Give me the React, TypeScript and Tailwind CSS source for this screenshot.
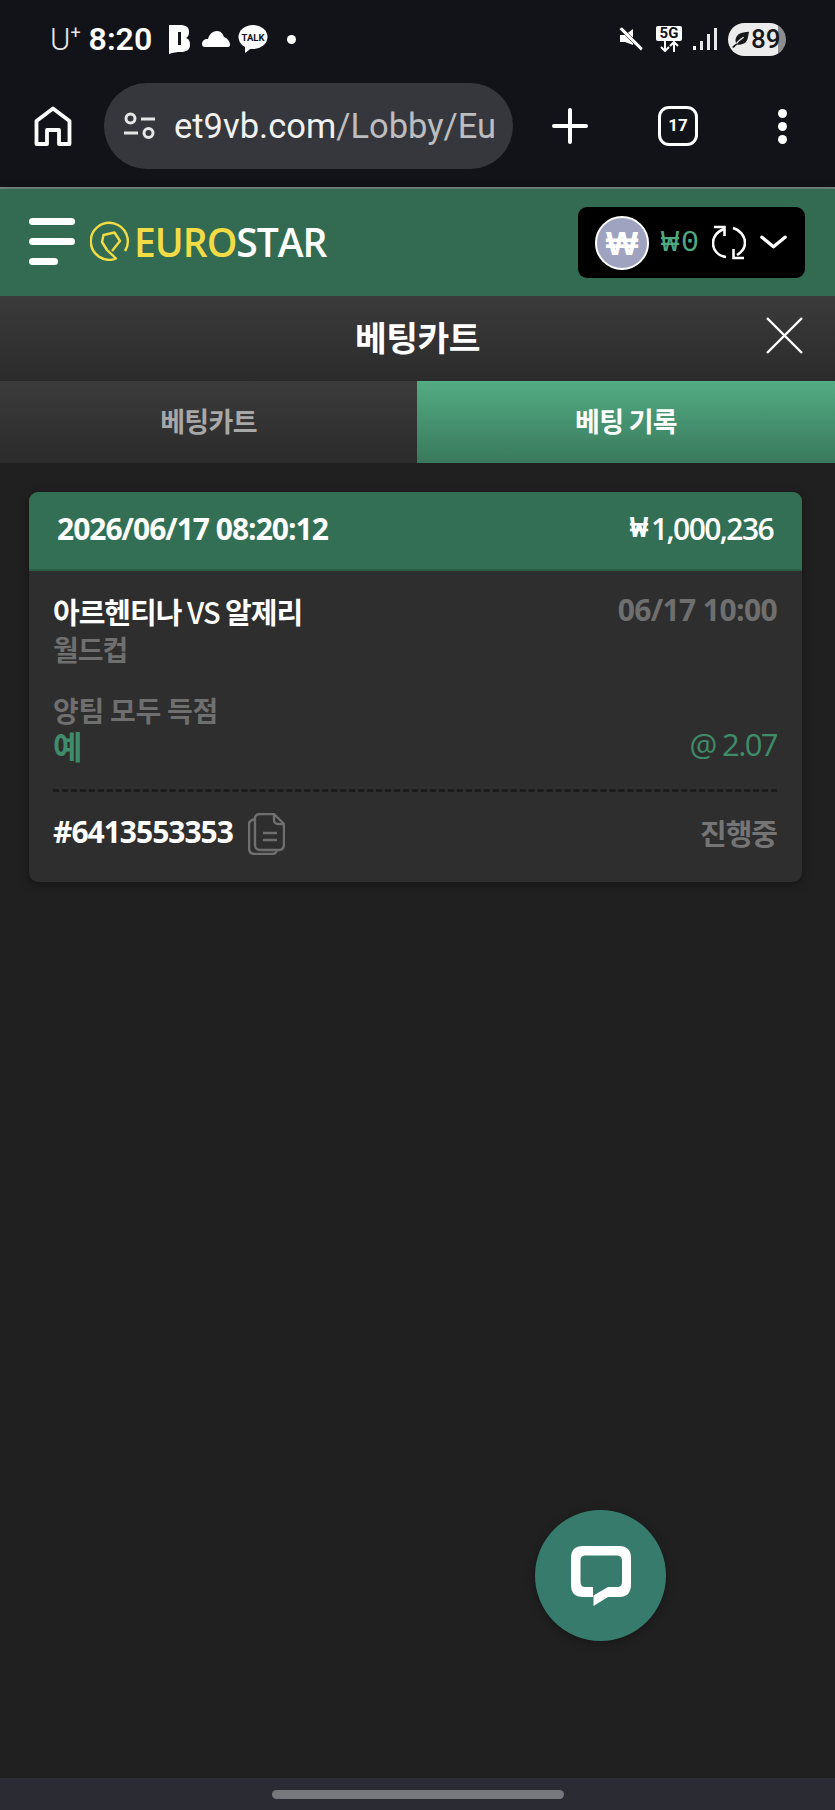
const ko = "font-['Noto_Sans_CJK_KR','Noto_Sans',sans-serif]"

function StatusBar() {
  return (
    <div className="flex h-[83px] items-start justify-between pt-[22px] pl-[50px] pr-[49px]">
      <div className="flex h-[34px] items-center">
        <span className="font-['Roboto',sans-serif] text-[31px] leading-none font-light text-[#e8e8e8]">U</span>
        <span className="mb-[13px] font-['Roboto',sans-serif] text-[18px] leading-none text-[#e8e8e8]">+</span>
        <span className="ml-[8px] font-['Roboto',sans-serif] text-[32px] leading-none font-semibold text-white">8:20</span>
        <svg className="ml-[17px]" width="21" height="30" viewBox="0 0 21 30" fill="#fff">
          <path d="M0 1h11c6 0 9 2 9 7 0 3-1 5-3 6 3 1 4 3 4 7 0 5-4 7-9 7-4 0-8 .6-12 2z" />
          <rect x="9" y="8" width="3" height="13" fill="#121318" />
        </svg>
        <svg className="ml-[12px]" width="28" height="16" viewBox="0 0 28 16" fill="#fff">
          <path d="M3 16C1 16 0 15 0 13c0-3 2-5 6-5 1-4 4-8 9-8 4 0 6 3 7 6 3 1 6 4 6 8 0 1-1 2-2 2z" />
        </svg>
        <svg className="ml-[8px]" width="30" height="28" viewBox="0 0 30 28">
          <ellipse cx="15" cy="12" rx="14.5" ry="12" fill="#fff" />
          <path d="M7 20l0 8 8-6z" fill="#fff" />
          <text x="15" y="15.5" textAnchor="middle" fontSize="9.5" fontWeight="700" fontFamily="Roboto, sans-serif" fill="#121318">TALK</text>
        </svg>
        <span className="ml-[19px] h-[9px] w-[9px] rounded-full bg-white" />
      </div>
      <div className="flex h-[34px] items-center">
        <svg width="24" height="24" viewBox="0 0 24 24" fill="#fff">
          <path d="M1 8h5l8-6v16L6 15H1z" />
          <path d="M0 2l3-2 21 21-2 3z" stroke="#121318" strokeWidth="0.6" />
        </svg>
        <div className="ml-[13px] flex w-[26px] flex-col items-center">
          <span className="flex h-[15px] w-[26px] items-center justify-center rounded-[2px] bg-white font-['Roboto',sans-serif] text-[15px] leading-none font-bold text-[#121318]">5G</span>
          <svg width="20" height="11" viewBox="0 0 20 11" fill="none" stroke="#fff" strokeWidth="2">
            <path d="M6 0v10M2 6l4 4 4-4M15 11V1M11 5l4-4 4 4" />
          </svg>
        </div>
        <div className="ml-[11px] flex h-[22px] items-end gap-[4px]">
          <span className="h-[4px] w-[3px] bg-white" />
          <span className="h-[9px] w-[3px] bg-[#e8e8e8]" />
          <span className="h-[16px] w-[3px] bg-[#e8e8e8]" />
          <span className="h-[22px] w-[3px] bg-[#e8e8e8]" />
        </div>
        <div className="ml-[11px] flex h-[33px] w-[58px] items-center overflow-hidden rounded-full bg-[linear-gradient(90deg,#ececec_86%,#8d8d8d_86%)] pl-[3px]">
          <svg width="19" height="18" viewBox="0 0 21 20" fill="#17181c">
            <path d="M1 19c2-2 3-3 5-4-2-3-1-7 2-10 3-2 8-3 12-3-1 4-1 9-4 12-3 2-6 3-9 2-1 1-3 2-4 4z" />
            <path d="M6 15c2-3 5-5 8-7" fill="none" stroke="#ececec" strokeWidth="1.5" />
          </svg>
          <span className="ml-[1px] font-['Roboto',sans-serif] text-[26px] leading-none font-medium text-[#17181c]">89</span>
        </div>
      </div>
    </div>
  )
}

function BrowserBar() {
  return (
    <div className="flex h-[86px] items-center pl-[34px]">
      <svg width="38" height="40" viewBox="0 0 38 40" fill="none" stroke="#fff" strokeWidth="3.8">
        <path d="M2.5 38V15L19 2.5 35.5 15v23H25V24H13v14z" strokeLinejoin="round" />
      </svg>
      <div className="ml-[32px] flex h-[86px] w-[409px] items-center rounded-full bg-[#36373c] pl-[19px]">
        <svg width="33" height="28" viewBox="0 0 33 28" fill="none" stroke="#e6e6e6" strokeWidth="3">
          <circle cx="7.5" cy="6.5" r="4.5" />
          <path d="M18 7h14M1 21h14" />
          <circle cx="25.5" cy="21" r="4.5" />
        </svg>
        <span className="ml-[18px] whitespace-nowrap font-['Roboto',sans-serif] text-[34.5px] leading-none text-[#bdbdc0]">
          <span className="text-[#f1f1f1]">et9vb.com</span>/Lobby/Eu
        </span>
      </div>
      <svg className="ml-[39px]" width="36" height="36" viewBox="0 0 36 36" stroke="#fff" strokeWidth="4" strokeLinecap="round">
        <path d="M18 2v32M2 18h32" />
      </svg>
      <div className="ml-[70px] flex h-[40px] w-[40px] items-center justify-center rounded-[11px] border-[3.5px] border-white font-['Roboto',sans-serif] text-[17px] font-bold text-white">
        17
      </div>
      <div className="ml-[80px] flex flex-col gap-[4px]">
        <span className="h-[9px] w-[9px] rounded-full bg-white" />
        <span className="h-[9px] w-[9px] rounded-full bg-white" />
        <span className="h-[9px] w-[9px] rounded-full bg-white" />
      </div>
    </div>
  )
}

function Logo() {
  return (
    <div className="ml-[15px] mb-[3px] flex items-center">
      <svg width="40" height="40" viewBox="0 0 40 40" fill="none" stroke="#f2dc45" strokeWidth="2.4" strokeLinejoin="round">
        <path d="M35 30A18.5 18.5 0 1 0 26 37.5L17 29 12 21 13.5 14 24.5 11.5 30 20 22 30" />
      </svg>
      <span className="ml-[4px] font-['Open_Sans',sans-serif] text-[39px] leading-none font-semibold tracking-[-1px] text-[#f2dc45]">
        EURO<span className="text-white">STAR</span>
      </span>
    </div>
  )
}

function Header() {
  return (
    <header className="flex h-[107px] items-center justify-between bg-[#336b52] pr-[30px] pl-[29px] shadow-[0_2px_6px_rgba(0,0,0,0.5)]">
      <div className="flex items-center">
        <div className="mb-[3px] flex w-[46px] flex-col gap-[13px]">
          <span className="h-[7px] w-[46px] rounded-full bg-white" />
          <span className="h-[7px] w-[46px] rounded-full bg-white" />
          <span className="h-[7px] w-[29px] rounded-full bg-white" />
        </div>
        <Logo />
      </div>
      <div className="flex h-[71px] w-[227px] items-center rounded-[9px] bg-black pl-[17px]">
        <div className="flex h-[54px] w-[54px] items-center justify-center rounded-full border-2 border-white bg-[#a0a3c0]">
          <span className="font-['Liberation_Sans',sans-serif] text-[34px] leading-none font-bold text-white">₩</span>
        </div>
        <span className="ml-[12px] font-['Liberation_Mono',monospace] text-[30px] leading-none tracking-[2px] text-[#4fa97f]">₩0</span>
        <svg className="ml-[11px]" width="34" height="36" viewBox="0 0 34 36" fill="none" stroke="#fff" strokeWidth="2.6">
          <path d="M12 4C4 7 1 13 1 18c0 7 5 13 13 14M21 3c7 2 12 8 12 15 0 5-3 9-8 12" />
          <path d="M2 2h10.5v9M32 33H21.500v-9" />
        </svg>
        <svg className="mb-[2px] ml-[14px]" width="27" height="16" viewBox="0 0 28 16" fill="none" stroke="#fff" strokeWidth="3.5" strokeLinecap="round" strokeLinejoin="round">
          <path d="M2 3l12 10L26 3" />
        </svg>
      </div>
    </header>
  )
}

function BetCard() {
  return (
    <div className={`ml-[29px] w-[773px] overflow-hidden rounded-[9px] bg-[#2e2e2e] shadow-[0_2px_8px_rgba(0,0,0,0.4)] ${ko}`}>
      <div className="flex h-[79px] items-center justify-between border-b-2 border-[#2c5f48] bg-[#336f55] pr-[29px] pb-[4px] pl-[28px] text-white">
        <span className="font-['Open_Sans',sans-serif] text-[30px] leading-none font-bold tracking-[-1px]">2026/06/17 08:20:12</span>
        <span className="flex items-center font-['Open_Sans',sans-serif] text-[30px] leading-none font-semibold tracking-[-1.6px]">
          <span className="mr-[3px] font-['Liberation_Mono',monospace] font-bold tracking-normal">₩</span>1,000,236
        </span>
      </div>
      <div className="pr-[25px] pl-[24px]">
        <div className="flex items-start justify-between pt-[21px]">
          <div className="flex flex-col">
            <span className="text-[29px] leading-[38px] font-bold tracking-[-1px] text-white">
              아르헨티나 <span className="font-medium">VS</span> 알제리
            </span>
            <span className="text-[28px] leading-[38px] font-bold tracking-[-1px] text-[#6f6f6f]">월드컵</span>
          </div>
          <span className="-mt-[1px] font-['Open_Sans',sans-serif] text-[30px] leading-[38px] font-bold tracking-[-0.6px] text-[#6f6f6f]">06/17 10:00</span>
        </div>
        <div className="mt-[25px] flex items-end justify-between border-b-[3px] border-dashed border-[#1c1c1c] pb-[27px]">
          <div className="flex flex-col">
            <span className="text-[28px] leading-[35px] font-bold tracking-[-0.3px] text-[#6f6f6f]">양팀 모두 득점</span>
            <span className="text-[32px] leading-[34px] font-bold tracking-[-1px] text-[#3f8c6b]">예</span>
          </div>
          <span className="mb-[1px] font-['Open_Sans',sans-serif] text-[31px] leading-[34px] tracking-[-1.6px] text-[#3f8c6b]">@ 2.07</span>
        </div>
        <div className="flex h-[90px] items-center justify-between pb-[10px]">
          <div className="flex items-center">
            <span className="font-['Open_Sans',sans-serif] text-[30px] leading-none font-bold tracking-[-1px] text-white">#6413553353</span>
            <svg className="mt-[3px] ml-[15px]" width="37" height="42" viewBox="0 0 37 42" fill="none" stroke="#6f6f6f" strokeWidth="2.4" strokeLinejoin="round">
              <path d="M7 6C3 7 1 8 1 11v24c0 4 2 6 6 6h17c2 0 4-1 5-3" />
              <path d="M7 5c0-2 2-4 5-4h14l10 10v20c0 4-2 6-5 6H12c-3 0-5-2-5-5z" />
              <path d="M26 1v6c0 3 2 4 4 4h6M15 20h14M15 27h14" />
            </svg>
          </div>
          <span className="text-[29px] leading-none font-bold tracking-[-1px] text-[#757575]">진행중</span>
        </div>
      </div>
    </div>
  )
}

export default function App() {
  return (
    <div className="relative flex min-h-[1810px] w-[835px] flex-col overflow-hidden bg-[#202020]">
      <div className="h-[187px] bg-[#121318]">
        <StatusBar />
        <BrowserBar />
      </div>
      <div className="h-[2px] bg-[#72897f]" />
      <Header />

      <div className={`relative flex h-[85px] items-center justify-center bg-gradient-to-b from-[#3b3b3b] to-[#2b2b2b] pb-[5px] ${ko}`}>
        <span className="text-[34.5px] leading-none font-bold tracking-[-0.5px] text-white">베팅카트</span>
        <svg className="absolute top-[21px] right-[32px]" width="37" height="37" viewBox="0 0 37 37" stroke="#fff" strokeWidth="2.4">
          <path d="M1 1l35 35M36 1L1 36" />
        </svg>
      </div>

      <div className={`flex h-[82px] ${ko}`}>
        <div className="flex w-[417px] items-center justify-center bg-gradient-to-b from-[#3c3c3c] to-[#2b2b2b] pb-[2px] text-[27px] font-bold tracking-[-0.7px] text-[#a8a8a8]">
          베팅카트
        </div>
        <div className="flex flex-1 items-center justify-center bg-gradient-to-b from-[#53ac84] to-[#39795d] pb-[2px] text-[27px] font-bold tracking-[-0.7px] text-white">
          베팅 기록
        </div>
      </div>

      <main className="flex-1 pt-[29px]">
        <BetCard />
      </main>

      <button className="absolute top-[1510px] left-[535px] flex h-[131px] w-[131px] items-center justify-center rounded-full bg-[#377b6c] shadow-[0_2px_10px_rgba(0,0,0,0.3)]">
        <svg width="60" height="60" viewBox="0 0 60 60" fill="#fff">
          <path d="M12 0H48C56 0 60 4 60 12V38C60 47 56 51 48 51H37L22.500 60V49.500L37 41H46C49.500 41 51 39 51 36V15C51 11 49 9.500 45 9.500H15C11 9.500 9.500 11 9.500 15V36C9.500 39 11 41 14 41H22V51H12C4 51 0 47 0 39V12C0 4 4 0 12 0Z" />
        </svg>
      </button>

      <div className="flex h-[32px] items-start justify-center bg-[#2b2c33] pt-[12px]">
        <span className="h-[9px] w-[292px] rounded-full bg-[#77787c]" />
      </div>
    </div>
  )
}
